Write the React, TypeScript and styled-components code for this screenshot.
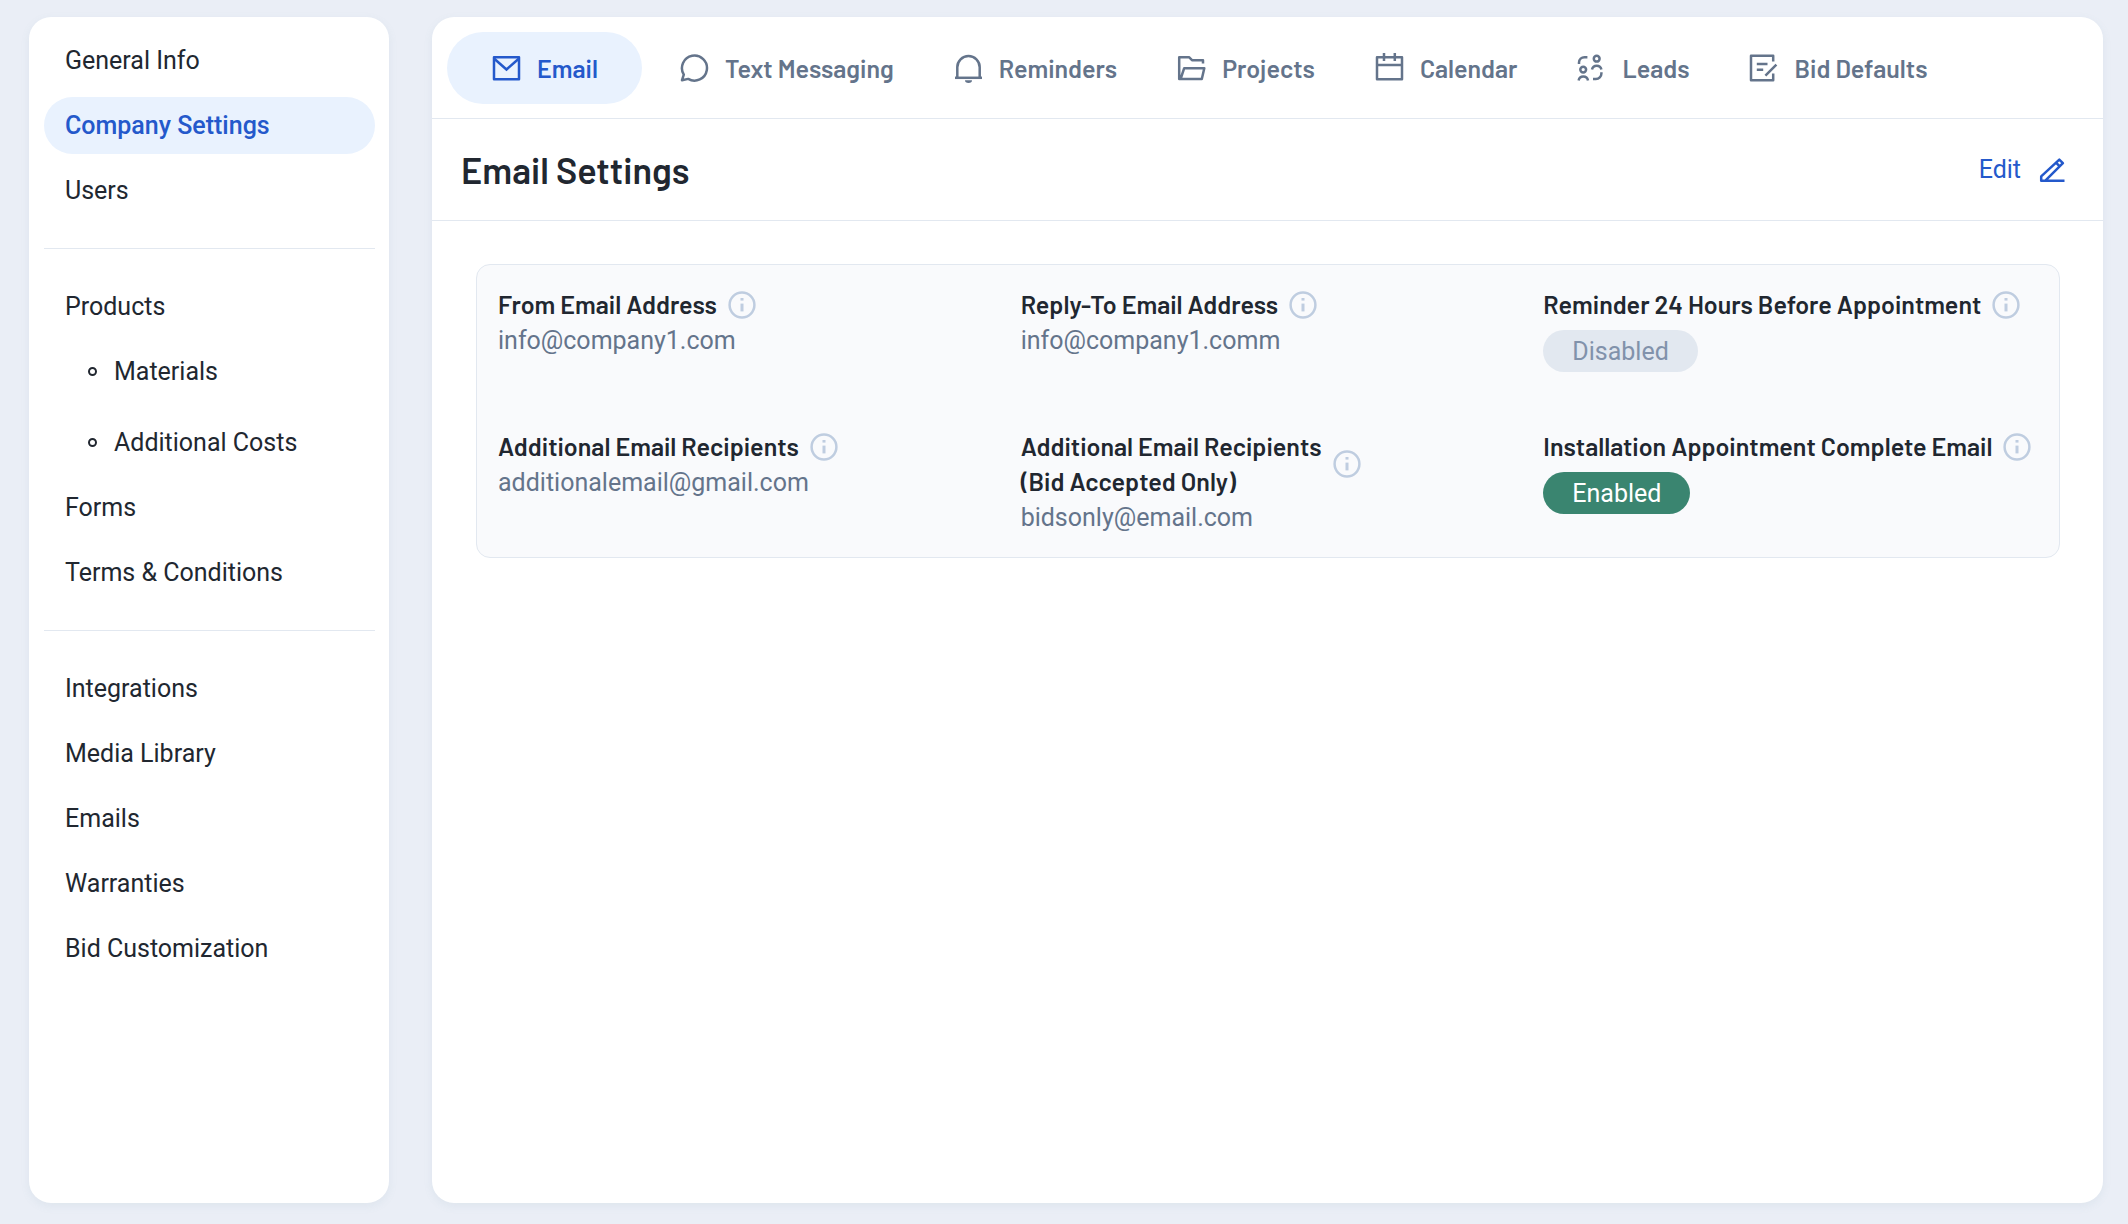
import React from "react";
import styled, { createGlobalStyle, css } from "styled-components";

const color = {
  page: "#eaeef6",
  surface: "#ffffff",
  panel: "#f9fafc",
  line: "#e2e8f0",
  text: "#212730",
  muted: "#64748b",
  faint: "#bfcde0",
  accent: "#2459cb",
  accentSoft: "#e9f2fe",
};

const headingFont = `Barlow, Roboto, "Liberation Sans", sans-serif`;

const GlobalStyle = createGlobalStyle`
  *, *::before, *::after { box-sizing: border-box; }
  body {
    margin: 0;
    background: ${color.page};
    color: ${color.text};
    font-family: Roboto, "Liberation Sans", sans-serif;
    font-size: 25px;
    line-height: 35px;
  }
  ul, dl, dd, h1 { margin: 0; padding: 0; }
  ul { list-style: none; }
  a { color: inherit; text-decoration: none; }
  button { font: inherit; border: 0; background: none; padding: 0; cursor: pointer; }
  svg { display: block; flex: none; }
`;

const Page = styled.div`
  display: grid;
  grid-template-columns: 360px minmax(0, 1fr);
  gap: 43px;
  min-height: 100vh;
  padding: 17px 25px 21px 29px;
`;

const cardStyle = css`
  background: ${color.surface};
  border-radius: 22px;
  box-shadow: 0 3px 10px rgba(100, 140, 150, 0.09);
`;

const Sidebar = styled.nav`
  ${cardStyle}
  padding: 15px 14px 15px 15px;
`;

const NavGroup = styled.ul`
  display: flex;
  flex-direction: column;
  gap: 8px;

  & + & {
    margin-top: 29px;
    padding-top: 29px;
    border-top: 1px solid ${color.line};
  }
`;

const NavLink = styled.a<{ $active?: boolean }>`
  display: flex;
  align-items: center;
  height: 57px;
  padding: 0 21px;
  border-radius: 29px;
  font-size: 25px;
  background: ${(p) => (p.$active ? color.accentSoft : "transparent")};
  color: ${(p) => (p.$active ? color.accent : "inherit")};
  font-weight: ${(p) => (p.$active ? 500 : 400)};
`;

const SubNav = styled.ul`
  display: flex;
  flex-direction: column;
  gap: 14px;
  margin-top: 8px;
  padding-left: 23px;
`;

const SubLink = styled(NavLink)`
  gap: 17px;

  &::before {
    content: "";
    width: 9px;
    height: 9px;
    border: 2px solid currentColor;
    border-radius: 50%;
  }
`;

const Main = styled.main`
  ${cardStyle}
`;

const Tabs = styled.nav`
  display: flex;
  padding: 15px 15px 14px;
  border-bottom: 1px solid ${color.line};
`;

const Tab = styled.button<{ $active?: boolean }>`
  display: flex;
  align-items: center;
  gap: 16px;
  height: 72px;
  padding: 0 ${(p) => (p.$active ? 44 : 29)}px;
  margin-right: ${(p) => (p.$active ? 8 : 1)}px;
  border-radius: 36px;
  font-family: ${headingFont};
  font-size: 25px;
  font-weight: 600;
  white-space: nowrap;
  background: ${(p) => (p.$active ? color.accentSoft : "transparent")};
  color: ${(p) => (p.$active ? color.accent : color.muted)};
`;

const Header = styled.header`
  display: flex;
  align-items: center;
  justify-content: space-between;
  height: 102px;
  padding: 0 36px 0 29px;
  border-bottom: 1px solid ${color.line};
`;

const Title = styled.h1`
  font-family: ${headingFont};
  font-size: 36px;
  line-height: 44px;
  font-weight: 600;
`;

const EditButton = styled.button`
  display: flex;
  align-items: center;
  gap: 16px;
  color: ${color.accent};
`;

const Panel = styled.dl`
  display: grid;
  grid-template-columns: repeat(3, minmax(0, 1fr));
  row-gap: 57px;
  margin: 43px;
  margin-left: 44px;
  padding: 22px 7px;
  background: ${color.panel};
  border: 1px solid ${color.line};
  border-radius: 14px;
`;

const Setting = styled.div`
  padding-left: 14px;
`;

const Label = styled.dt`
  display: flex;
  align-items: center;
  gap: 10px;
  font-family: ${headingFont};
  font-size: 25px;
  font-weight: 600;
  white-space: pre;
`;

const Value = styled.dd`
  && {
    margin-top: 1px;
  }
  color: ${color.muted};
`;

const Badge = styled.span<{ $on: boolean }>`
  display: inline-flex;
  align-items: center;
  height: 42px;
  margin-top: 7px;
  padding: 0 29px;
  border-radius: 21px;
  vertical-align: top;
  background: ${(p) => (p.$on ? "#3a8570" : color.line)};
  color: ${(p) => (p.$on ? "#ffffff" : "#8192ab")};
`;

const InfoButton = styled.button`
  color: ${color.faint};
`;

function Icon({ children }: { children: React.ReactNode }) {
  return (
    <svg width="30" height="30" viewBox="0 0 30 30" fill="none" stroke="currentColor" strokeWidth="2.5" aria-hidden="true">
      {children}
    </svg>
  );
}

const MailIcon = () => (
  <Icon>
    <path d="M3 4.2H28V26.2H3Z" strokeLinejoin="round" />
    <path d="M3 5.5L15.5 16.5L28 5.5" />
  </Icon>
);
const ChatIcon = () => (
  <Icon>
    <path d="M4.8 21.6A12.5 12.5 0 1 1 9.2 25.9L3 27.2Z" strokeLinejoin="round" />
  </Icon>
);
const BellIcon = () => (
  <Icon>
    <path d="M4.3 24.8V14.2A11.2 11.2 0 0 1 26.7 14.2V24.8" />
    <path d="M2 24.8H29" />
    <path d="M12 27.3H19A3.5 2.7 0 0 1 12 27.3Z" fill="currentColor" stroke="none" />
  </Icon>
);
const FolderIcon = () => (
  <Icon>
    <path d="M27 10.5V7.2H16L13 4.2H3.2V26H4.6L8.2 15.2H28.3L25.8 26H4.6" strokeLinejoin="round" />
  </Icon>
);
const CalendarIcon = () => (
  <Icon>
    <path d="M3 4.3H28V26.3H3Z" strokeLinejoin="round" />
    <path d="M3 12H28M10 0V8M20.8 0V8" />
  </Icon>
);
const LeadsIcon = () => (
  <Icon>
    <circle cx="20.7" cy="5.7" r="2.9" />
    <circle cx="7.2" cy="16.6" r="2.9" />
    <path d="M16 16.6A4.8 4.8 0 0 1 25.4 16.6M2.6 27.4A4.8 4.8 0 0 1 12 27.4" />
    <path d="M3 11V9.5A5.5 5.5 0 0 1 8.5 4.2H11.4M25.4 19.2V20.6A5.5 5.5 0 0 1 19.9 26.1H17" />
  </Icon>
);
const BidIcon = () => (
  <Icon>
    <path d="M25.2 8.5V2.8H3V27.2H25.2V20.5" strokeLinejoin="round" />
    <path d="M8.8 11H19.5M8.8 16.8H15.2M17.4 22.7L28.4 11.7" />
  </Icon>
);
const PencilIcon = () => (
  <Icon>
    <path d="M27.5 25.7H4.2V21.4L22.3 4.6L25.9 8.1L8.6 25.3" strokeLinejoin="round" />
    <path d="M19 7.6L22.7 11.3" />
  </Icon>
);
const InfoIcon = () => (
  <Icon>
    <circle cx="15" cy="15" r="12.4" />
    <path d="M15 13.6V21.4" strokeWidth="3" />
    <path d="M15 8V10.6" strokeWidth="3" />
  </Icon>
);

const tabs = [
  { name: "Email", icon: MailIcon },
  { name: "Text Messaging", icon: ChatIcon },
  { name: "Reminders", icon: BellIcon },
  { name: "Projects", icon: FolderIcon },
  { name: "Calendar", icon: CalendarIcon },
  { name: "Leads", icon: LeadsIcon },
  { name: "Bid Defaults", icon: BidIcon },
];

type NavEntry = { name: string; children?: string[] };

const navGroups: NavEntry[][] = [
  [{ name: "General Info" }, { name: "Company Settings" }, { name: "Users" }],
  [
    { name: "Products", children: ["Materials", "Additional Costs"] },
    { name: "Forms" },
    { name: "Terms & Conditions" },
  ],
  [
    { name: "Integrations" },
    { name: "Media Library" },
    { name: "Emails" },
    { name: "Warranties" },
    { name: "Bid Customization" },
  ],
];

const settings: { label: string; value: string | boolean }[] = [
  { label: "From Email Address", value: "info@company1.com" },
  { label: "Reply-To Email Address", value: "info@company1.comm" },
  { label: "Reminder 24 Hours Before Appointment", value: false },
  { label: "Additional Email Recipients", value: "additionalemail@gmail.com" },
  { label: "Additional Email Recipients\n(Bid Accepted Only)", value: "bidsonly@email.com" },
  { label: "Installation Appointment Complete Email", value: true },
];

export default function App() {
  return (
    <>
      <GlobalStyle />
      <Page>
        <Sidebar>
          {navGroups.map((group, i) => (
            <NavGroup key={i}>
              {group.map((item) => {
                const active = item.name === "Company Settings";
                return (
                  <li key={item.name}>
                    <NavLink href="#" $active={active} aria-current={active ? "page" : undefined}>
                      {item.name}
                    </NavLink>
                    {item.children && (
                      <SubNav>
                        {item.children.map((child) => (
                          <li key={child}>
                            <SubLink href="#">{child}</SubLink>
                          </li>
                        ))}
                      </SubNav>
                    )}
                  </li>
                );
              })}
            </NavGroup>
          ))}
        </Sidebar>
        <Main>
          <Tabs>
            {tabs.map(({ name, icon: TabIcon }) => (
              <Tab key={name} type="button" $active={name === "Email"}>
                <TabIcon />
                {name}
              </Tab>
            ))}
          </Tabs>
          <Header>
            <Title>Email Settings</Title>
            <EditButton type="button">
              Edit
              <PencilIcon />
            </EditButton>
          </Header>
          <Panel>
            {settings.map(({ label, value }) => (
              <Setting key={label}>
                <Label>
                  {label}
                  <InfoButton type="button" aria-label={`About ${label}`}>
                    <InfoIcon />
                  </InfoButton>
                </Label>
                <Value>
                  {typeof value === "boolean" ? (
                    <Badge $on={value}>{value ? "Enabled" : "Disabled"}</Badge>
                  ) : (
                    value
                  )}
                </Value>
              </Setting>
            ))}
          </Panel>
        </Main>
      </Page>
    </>
  );
}
